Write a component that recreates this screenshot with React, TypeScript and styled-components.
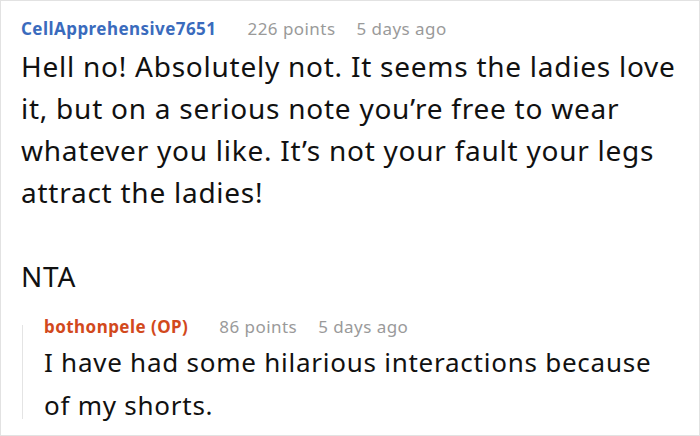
import React from 'react';
import styled, { createGlobalStyle } from 'styled-components';

const GlobalStyle = createGlobalStyle`
  html, body {
    margin: 0;
    padding: 0;
    background: #ffffff;
  }
  body {
    font-family: "Noto Sans", "Open Sans", sans-serif;
    color: #111111;
  }
`;

const Frame = styled.div`
  box-sizing: border-box;
  width: 700px;
  height: 436px;
  border: 1px solid #e2e2e2;
  padding: 14px 16px 0 20px;
  overflow: hidden;
`;

const Comment = styled.div`
  display: flex;
  flex-direction: column;
`;

const Meta = styled.div`
  display: flex;
  align-items: baseline;
  gap: 21px;
  font-size: 17px;
  line-height: 28px;
  letter-spacing: 0.45px;
  color: #9a9a9a;
`;

const Author = styled.span<{ $op?: boolean }>`
  font-weight: 700;
  margin-right: 10px;
  color: ${props => (props.$op ? '#d2491c' : '#3a6bbd')};
`;

const Body = styled.div<{ $small?: boolean }>`
  font-size: ${props => (props.$small ? '26px' : '28px')};
  line-height: ${props => (props.$small ? '43px' : '42px')};
  letter-spacing: 0.75px;
  margin-top: ${props => (props.$small ? '0' : '2px')};
`;

const Reply = styled.div`
  position: relative;
  margin-top: 16px;
  padding-left: 23px;

  &::before {
    content: '';
    position: absolute;
    left: 1px;
    top: 12px;
    bottom: 8px;
    width: 1px;
    background: #e4e4e4;
  }
`;

export default function App() {
  return (
    <>
      <GlobalStyle />
      <Frame>
        <Comment>
          <Meta>
            <Author>CellApprehensive7651</Author>
            <span>226 points</span>
            <span>5 days ago</span>
          </Meta>
          <Body>
            Hell no! Absolutely not. It seems the ladies love it, but on a serious note you’re free to wear whatever you like. It’s not your fault your legs attract the ladies!
            <br />
            <br />
            NTA
          </Body>
          <Reply>
            <Meta>
              <Author $op>bothonpele (OP)</Author>
              <span>86 points</span>
              <span>5 days ago</span>
            </Meta>
            <Body $small>I have had some hilarious interactions because of my shorts.</Body>
          </Reply>
        </Comment>
      </Frame>
    </>
  );
}
